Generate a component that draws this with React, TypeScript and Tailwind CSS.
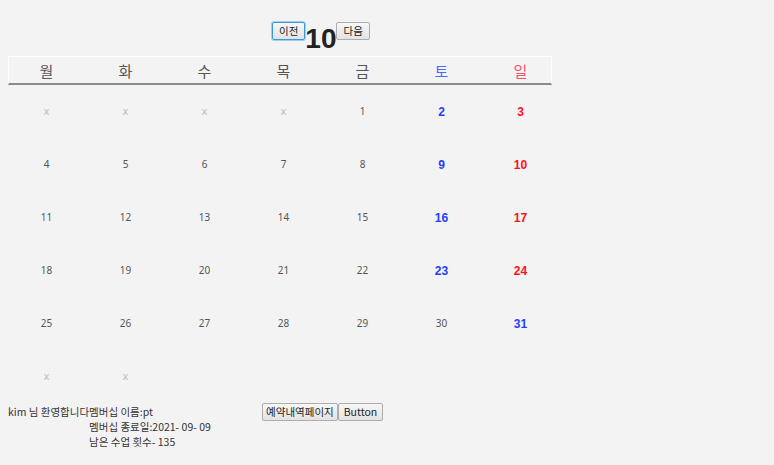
const days = ["월", "화", "수", "목", "금", "토", "일"];

const weeks: string[][] = [
  ["x", "x", "x", "x", "1", "2", "3"],
  ["4", "5", "6", "7", "8", "9", "10"],
  ["11", "12", "13", "14", "15", "16", "17"],
  ["18", "19", "20", "21", "22", "23", "24"],
  ["25", "26", "27", "28", "29", "30", "31"],
  ["x", "x", "", "", "", "", ""],
];

function cellClass(v: string, col: number, row: number) {
  if (v === "x") return "text-[10px] text-[#bdbdbd] [font-family:'DejaVu_Sans',sans-serif]";
  const bold = "text-[12px] font-bold [font-family:'Liberation_Sans',sans-serif] ";
  const plain = "text-[10px] text-[#555] [font-family:'Noto_Sans',sans-serif]";
  // the last row puts 31 in blue, 30 plain
  if (row === 4) {
    if (col === 6) return bold + "text-[#1f3fff]";
    return plain;
  }
  if (col === 5) return bold + "text-[#1f3fff]";
  if (col === 6) return bold + "text-[#ff1020]";
  return plain;
}

function Btn({ children, focus }: { children: React.ReactNode; focus?: boolean }) {
  return (
    <button
      className={
        "h-[18px] rounded-[2px] border bg-gradient-to-b from-[#f7f7f7] to-[#e3e3e3] px-[3px] text-[10.5px] leading-none text-[#222] " +
        (focus ? "border-[#3a9ad9] shadow-[0_0_0_1px_#9fd0f0]" : "border-[#adadad]")
      }
    >
      {children}
    </button>
  );
}

export default function App() {
  return (
    <div
      className="h-[465px] w-full bg-[#f3f3f3] text-[#333]"
      style={{ fontFamily: '"Noto Sans CJK KR", "Noto Sans", sans-serif' }}
    >
      <div className="flex items-start pl-[272px] pt-[22px]">
        <Btn focus>
          <span className="px-[3px]">이전</span>
        </Btn>
        <span className="mt-[3px] text-[28px] font-bold leading-none text-[#222] [font-family:'Liberation_Sans',sans-serif]">
          10
        </span>
        <Btn>
          <span className="px-[3px]">다음</span>
        </Btn>
      </div>

      <div className="ml-[8px] mt-[3px] h-[29px] w-[544px] border-x border-t border-white border-b-2 border-b-[#8a8a8a]">
        <div className="-ml-[2px] grid w-[553px] grid-cols-7">
          {days.map((d, i) => (
            <div
              key={d}
              className={
                "pt-[4px] text-center text-[15px] leading-[20px] " +
                (i === 5 ? "text-[#4a6cf5]" : i === 6 ? "text-[#f2506a]" : "text-[#555]")
              }
            >
              {d}
            </div>
          ))}
        </div>
      </div>

      <div className="ml-[7px] grid w-[553px] grid-cols-7">
        {weeks.map((w, r) =>
          w.map((v, c) => (
            <div
              key={r + "-" + c}
              className={"flex h-[53px] items-center justify-center " + cellClass(v, c, r)}
            >
              {v}
            </div>
          ))
        )}
      </div>

      <div className="flex items-start pl-[8px] text-[10.5px] leading-[15px] text-[#333]">
        <div className="shrink-0 whitespace-nowrap pt-[1px]">kim 님 환영합니다</div>
        <div className="w-[173px] whitespace-nowrap pt-[1px]">
          <div>멤버십 이름:pt</div>
          <div>멤버십 종료일:2021- 09- 09</div>
          <div>남은 수업 횟수- 135</div>
        </div>
        <div className="flex">
          <Btn>예약내역페이지</Btn>
          <Btn>
            <span className="px-[2px]">Button</span>
          </Btn>
        </div>
      </div>
    </div>
  );
}
